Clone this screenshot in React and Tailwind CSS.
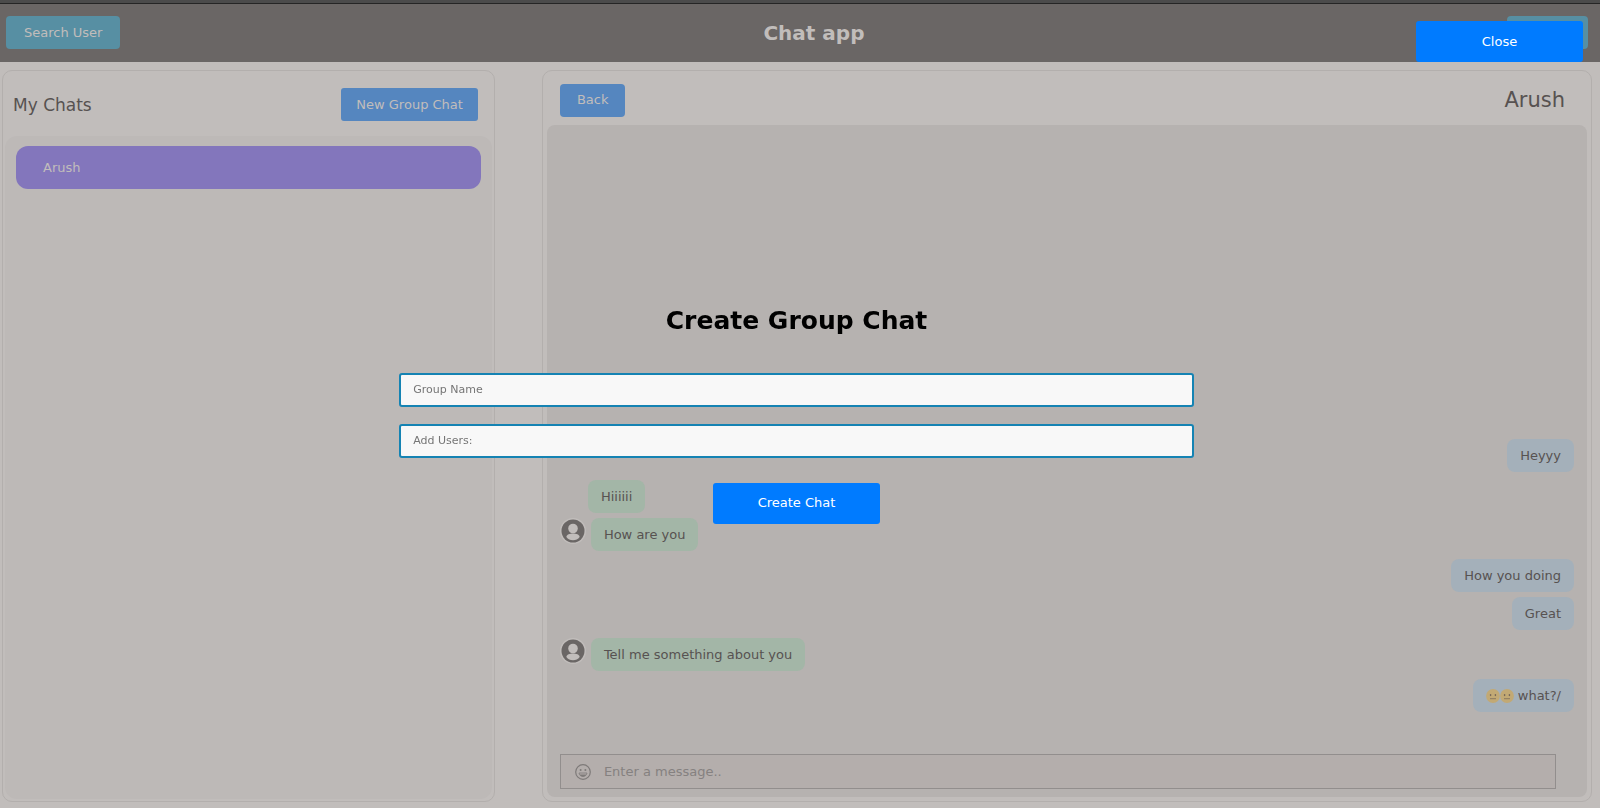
import React from "react";

const chats = [{ id: 1, name: "Arush" }];

const messages = [
  { id: 1, mine: true, text: "Heyyy", gap: "mt-0" },
  { id: 2, mine: false, text: "Hiiiiii", gap: "mt-2" },
  { id: 3, mine: false, text: "How are you", avatar: true, gap: "mt-[5px]" },
  { id: 4, mine: true, text: "How you doing", gap: "mt-2" },
  { id: 5, mine: true, text: "Great", gap: "mt-[5px]" },
  { id: 6, mine: false, text: "Tell me something about you", avatar: true, gap: "mt-2" },
  { id: 7, mine: true, faces: 2, text: "what?/", gap: "mt-2" },
];

const Avatar = () => (
  <svg viewBox="0 0 26 26" className="mr-[5px] size-[26px]" aria-hidden="true">
    <circle cx="13" cy="13" r="13" fill="#c1bdbb" />
    <circle cx="13" cy="13" r="11.5" fill="#6a6665" />
    <circle cx="13" cy="10.5" r="4.8" fill="#c1bdbb" />
    <path d="M6.4 19c0-2.3 3.6-3.4 6.6-3.4s6.6 1.1 6.6 3.4c-1.5 2.1-3.9 3.3-6.6 3.3S7.9 21.1 6.4 19z" fill="#c1bdbb" />
  </svg>
);

const NeutralFace = () => (
  <svg viewBox="0 0 14 14" className="size-3.5" role="img" aria-label="neutral face">
    <circle cx="7" cy="7" r="6.9" fill="#c2a974" />
    <ellipse cx="4.6" cy="6.1" rx="0.8" ry="1.1" fill="#75675a" />
    <ellipse cx="9.4" cy="6.1" rx="0.8" ry="1.1" fill="#75675a" />
    <rect x="4" y="9.2" width="6" height="1" fill="#8b795f" />
  </svg>
);

const SmileIcon = () => (
  <svg viewBox="0 0 16 16" className="size-4 text-[#7e7a79]" fill="none" aria-hidden="true">
    <circle cx="8" cy="8" r="7.3" stroke="currentColor" strokeWidth="1.2" />
    <circle cx="5.6" cy="6" r="1" fill="currentColor" />
    <circle cx="10.4" cy="6" r="1" fill="currentColor" />
    <path d="M4 9h8c-.3 2.2-1.9 3.5-4 3.5S4.3 11.2 4 9z" stroke="currentColor" strokeWidth="0.8" />
    <path d="M4.5 10.6h7c-.7 1.3-2 1.9-3.5 1.9s-2.8-.6-3.5-1.9z" fill="currentColor" />
  </svg>
);

const Header = () => (
  <header className="flex h-[62px] shrink-0 items-center justify-between border-t-3 border-[#4b4b4b] bg-[#6a6665] pl-1.5 pr-3 shadow-[inset_0_1px_0_#252525]">
    <button type="button" className="h-[33px] rounded bg-[#578fa3] px-[18px] text-[#c1bdbb]">Search User</button>
    <h1 className="text-xl font-bold text-[#c1bdbb]">Chat app</h1>
    <button type="button" className="h-[33px] rounded bg-[#578fa3] px-[18px] text-[#c1bdbb]">Logout</button>
  </header>
);

const MyChats = () => (
  <aside className="flex w-[31%] flex-col rounded-[10px] border border-[#b3afad] p-0.5">
    <div className="flex h-[63px] shrink-0 items-center justify-between pl-2 pr-3.5">
      <h2 className="text-[17px]">My Chats</h2>
      <button type="button" className="h-[33px] rounded-[3px] bg-[#5586bf] px-[15px] text-[#c1bdbb]">New Group Chat</button>
    </div>
    <ul className="flex-1 rounded-xl bg-[#bdb9b7] px-[11px] py-2.5">
      {chats.map((chat) => (
        <li key={chat.id}>
          <button type="button" className="h-[43px] w-full rounded-xl bg-[#8376bc] px-[27px] text-left text-[#c1bdbb]">
            {chat.name}
          </button>
        </li>
      ))}
    </ul>
  </aside>
);

const Message = ({ message }) => {
  if (message.mine) {
    return (
      <div className={`flex justify-end ${message.gap}`}>
        <p className="flex items-center rounded-lg bg-[#a4b0ba] px-[13px] py-1.5">
          {message.faces && (
            <span className="mr-1 flex">
              {Array.from({ length: message.faces }, (_, i) => (
                <NeutralFace key={i} />
              ))}
            </span>
          )}
          {message.text}
        </p>
      </div>
    );
  }
  return (
    <div className={`flex items-start ${message.gap}`}>
      {message.avatar ? <Avatar /> : <span className="w-7" />}
      <p className="rounded-lg bg-[#a3b6a7] px-[13px] py-1.5">{message.text}</p>
    </div>
  );
};

const ChatBox = () => (
  <main className="flex flex-1 flex-col rounded-[10px] border border-[#b3afad] p-1">
    <div className="flex h-[50px] shrink-0 items-center justify-between pl-[13px] pr-[22px]">
      <button type="button" className="h-[33px] rounded bg-[#5586bf] px-[17px] text-[#c1bdbb]">Back</button>
      <h2 className="text-[21px]">Arush</h2>
    </div>
    <section className="flex flex-1 flex-col justify-end rounded-lg bg-[#b6b2b0] px-[13px] pb-2">
      <div className="leading-[21px]">
        {messages.map((message) => (
          <Message key={message.id} message={message} />
        ))}
      </div>
      <form className="mr-[18px] mt-[42px] flex h-[35px] items-center border border-[#928e8d] bg-[#b4aeac] pl-3.5">
        <SmileIcon />
        <input
          type="text"
          aria-label="Message"
          placeholder="Enter a message.."
          className="ml-[13px] flex-1 bg-transparent outline-none placeholder:text-[#858180]"
        />
      </form>
    </section>
  </main>
);

const inputClass =
  "h-[34px] w-1/2 rounded-[3px] border-2 border-[#1583b3] bg-[#f8f8f8] px-3 text-[11px] outline-none placeholder:text-[#757575]";

const GroupChatModal = () => (
  <div role="dialog" aria-label="Create Group Chat" className="fixed inset-0 flex flex-col items-center justify-center pr-[7px] pt-5">
    <button type="button" className="absolute right-[17px] top-[21px] h-[41px] w-[167px] rounded-[3px] bg-[#007bff] text-white">
      Close
    </button>
    <h2 className="mb-9 text-[25px] font-bold leading-8 text-black">Create Group Chat</h2>
    <form className="flex w-full flex-col items-center px-0.5">
      <input type="text" aria-label="Group Name" placeholder="Group Name" className={`mb-[17px] ${inputClass}`} />
      <input type="text" aria-label="Add Users" placeholder="Add Users:" className={`mb-[25px] ${inputClass}`} />
      <button type="button" className="h-[41px] w-[167px] rounded-[3px] bg-[#007bff] text-white">Create Chat</button>
    </form>
  </div>
);

const App = () => (
  <div className="flex min-h-screen flex-col bg-[#c1bdbb] font-['DejaVu_Sans',sans-serif] text-[13px] leading-5 text-[#575251]">
    <Header />
    <div className="flex flex-1 justify-between gap-[47px] pb-1.5 pl-0.5 pr-2 pt-2">
      <MyChats />
      <ChatBox />
    </div>
    <GroupChatModal />
  </div>
);

export default App;
